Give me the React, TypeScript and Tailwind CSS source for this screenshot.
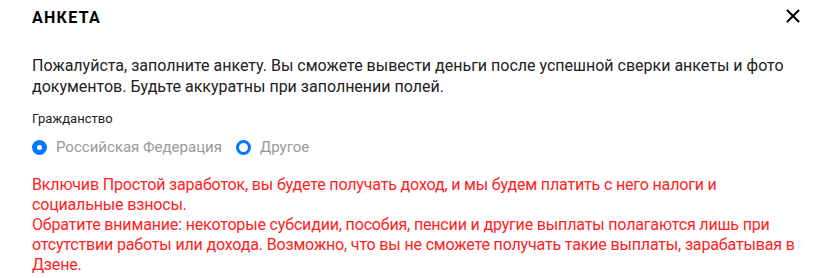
import { X } from 'lucide-react';

export default function App() {
  return (
    <div className="h-[278px] w-[829px] overflow-hidden bg-white font-['Roboto',sans-serif] text-black">
      <div className="flex items-start justify-between pl-8 pr-[25px] pt-[5px]">
        <h1 className="mt-[3px] text-[16px] font-bold tracking-[0.08em] leading-5">АНКЕТА</h1>
        <X className="h-[22px] w-[22px]" strokeWidth={2.2} />
      </div>

      <p className="mt-[28px] whitespace-nowrap px-8 text-[16px] leading-[20.5px] text-[#222]">
        Пожалуйста, заполните анкету. Вы сможете вывести деньги после успешной сверки анкеты и фото
        <br />
        документов. Будьте аккуратны при заполнении полей.
      </p>

      <div className="mt-[14px] px-8 text-[13px] leading-4 text-[#222]">Гражданство</div>

      <div className="mt-[10px] flex items-center gap-[14px] pl-[32px] pr-8 text-[15px] leading-5 text-[#999]">
        <label className="flex items-center gap-[9px]">
          <span className="flex h-[15px] w-[15px] items-center justify-center rounded-full bg-[#07f]">
            <span className="h-[5px] w-[5px] rounded-full bg-white" />
          </span>
          Российская Федерация
        </label>
        <label className="flex items-center gap-[9px]">
          <span className="h-[15px] w-[15px] rounded-full border-[3px] border-[#07f]" />
          Другое
        </label>
      </div>

      <div className="mt-[18px] whitespace-nowrap px-8 text-[16px] leading-5 tracking-[-0.01em] text-[#f22]">
        <p>
          Включив Простой заработок, вы будете получать доход, и мы будем платить с него налоги и
          <br />
          социальные взносы.
        </p>
        <p>
          Обратите внимание: некоторые субсидии, пособия, пенсии и другие выплаты полагаются лишь при
          <br />
          отсутствии работы или дохода. Возможно, что вы не сможете получать такие выплаты, зарабатывая в
          <br />
          Дзене.
        </p>
      </div>
    </div>
  );
}
